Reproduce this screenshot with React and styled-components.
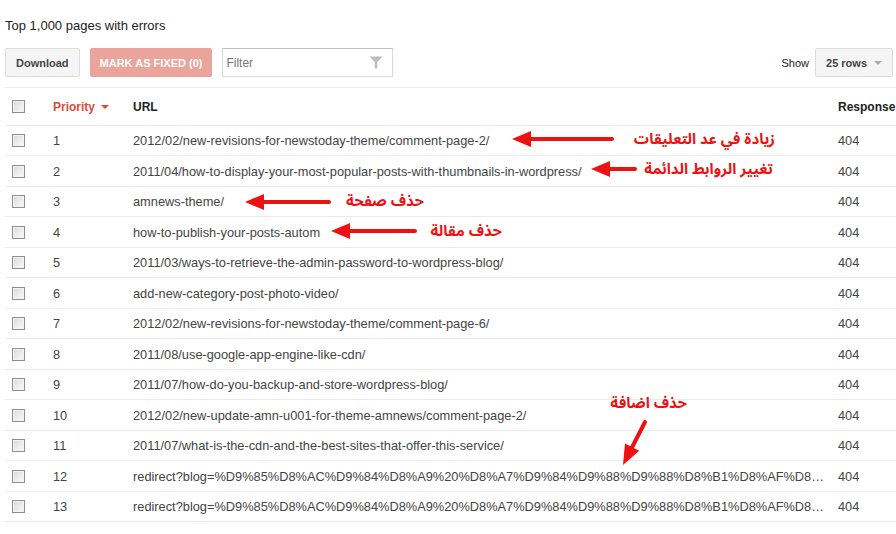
import React from "react";
import styled, { createGlobalStyle } from "styled-components";

const Global = createGlobalStyle`
  html, body { margin: 0; padding: 0; background: #fff; }
  body { font-family: "Liberation Sans", Arial, sans-serif; color: #222; }
`;

const Page = styled.div`
  position: relative;
  width: 896px;
  height: 534px;
  overflow: hidden;
  background: #fff;
`;

const Title = styled.h1`
  margin: 0;
  padding: 18px 0 0 5px;
  font-size: 13px;
  line-height: 15px;
  font-weight: normal;
  color: #222;
`;

const Toolbar = styled.div`
  display: flex;
  align-items: center;
  gap: 10px;
  margin-top: 15px;
  padding: 0 3px 0 5px;
  height: 29px;
`;

const Button = styled.button`
  height: 29px;
  padding: 0 ${(p) => p.$pad || 10}px;
  border-radius: 2px;
  font-family: "Liberation Sans", Arial, sans-serif;
  font-size: 11px;
  font-weight: bold;
  display: inline-flex;
  align-items: center;
  gap: 7px;
  border: 1px solid ${(p) => (p.$primary ? "#e9a39b" : "#dcdcdc")};
  background: ${(p) => (p.$primary ? "#eaa49c" : "#f5f5f5")};
  color: ${(p) => (p.$primary ? "#fff" : "#444")};
  cursor: default;
`;

const FilterBox = styled.div`
  width: 157px;
  height: 27px;
  border: 1px solid #d9d9d9;
  border-top-color: #c0c0c0;
  display: flex;
  align-items: center;
  justify-content: space-between;
  padding: 0 9px 0 3px;
  box-sizing: content-box;
  font-size: 12px;
  color: #777;
`;

const Spacer = styled.div`
  flex: 1;
`;

const ShowLabel = styled.span`
  font-size: 11px;
  color: #222;
  margin-right: -4px;
`;

const Caret = styled.span`
  width: 0;
  height: 0;
  border-left: 4px solid transparent;
  border-right: 4px solid transparent;
  border-top: 4px solid ${(p) => p.$color || "#aaa"};
  display: inline-block;
`;

const Table = styled.div`
  margin: 10px 0 0 5px;
  border-top: 1px solid #ebebeb;
`;

const Row = styled.div`
  display: grid;
  grid-template-columns: 48px 80px 705px 1fr;
  align-items: center;
  height: ${(p) => p.$h}px;
  border-bottom: 1px solid #ebebeb;
  font-size: ${(p) => (p.$head ? 12 : 12.8)}px;
  color: ${(p) => (p.$head ? "#222" : "#444")};
  font-weight: ${(p) => (p.$head ? "bold" : "normal")};
  white-space: nowrap;
`;

const Cell = styled.div`
  overflow: hidden;
  display: flex;
  align-items: center;
  gap: 6px;
  color: ${(p) => p.$color || "inherit"};
`;

const UrlCell = styled.div`
  overflow: hidden;
  text-overflow: ellipsis;
  white-space: nowrap;
  padding-right: 8px;
`;

const Check = styled.span`
  display: block;
  width: 11px;
  height: 11px;
  margin-left: 7px;
  border: 1px solid #8e8e8e;
  background: linear-gradient(135deg, #d9d9d9 0%, #eeeeee 60%, #f8f8f8 100%);
  box-shadow: inset 0 0 0 1px #f2f2f2;
`;

const Notes = styled.div`
  position: absolute;
  inset: 0;
  pointer-events: none;
`;

const Label = styled.span`
  position: absolute;
  right: ${(p) => p.$right}px;
  top: ${(p) => p.$top}px;
  direction: rtl;
  font-family: "Noto Sans Arabic", "DejaVu Sans", sans-serif;
  font-size: ${(p) => p.$size || 15}px;
  line-height: 20px;
  font-weight: bold;
  color: #ee1111;
  white-space: nowrap;
`;

const ArrowSvg = styled.svg`
  position: absolute;
  left: 0;
  top: 0;
`;

function Arrow({ x1, y1, x2, y2, head = 19, half = 8, w = 4 }) {
  const dx = x2 - x1;
  const dy = y2 - y1;
  const len = Math.hypot(dx, dy);
  const ux = dx / len;
  const uy = dy / len;
  const bx = x2 - ux * head;
  const by = y2 - uy * head;
  const px = -uy;
  const py = ux;
  const pts = `${x2},${y2} ${bx + px * half},${by + py * half} ${bx - px * half},${by - py * half}`;
  return (
    <g>
      <line x1={x1} y1={y1} x2={bx + ux * 2} y2={by + uy * 2} stroke="#ee1111" strokeWidth={w} strokeLinecap="round" />
      <polygon points={pts} fill="#ee1111" />
    </g>
  );
}

const rows = [
  "2012/02/new-revisions-for-newstoday-theme/comment-page-2/",
  "2011/04/how-to-display-your-most-popular-posts-with-thumbnails-in-wordpress/",
  "amnews-theme/",
  "how-to-publish-your-posts-autom",
  "2011/03/ways-to-retrieve-the-admin-password-to-wordpress-blog/",
  "add-new-category-post-photo-video/",
  "2012/02/new-revisions-for-newstoday-theme/comment-page-6/",
  "2011/08/use-google-app-engine-like-cdn/",
  "2011/07/how-do-you-backup-and-store-wordpress-blog/",
  "2012/02/new-update-amn-u001-for-theme-amnews/comment-page-2/",
  "2011/07/what-is-the-cdn-and-the-best-sites-that-offer-this-service/",
  "redirect?blog=%D9%85%D8%AC%D9%84%D8%A9%20%D8%A7%D9%84%D9%88%D9%88%D8%B1%D8%AF%D8%A8%D8%B1%D9%8A%D8%B3",
  "redirect?blog=%D9%85%D8%AC%D9%84%D8%A9%20%D8%A7%D9%84%D9%88%D9%88%D8%B1%D8%AF%D8%A8%D8%B1%D9%8A%D8%B3",
];

function Funnel() {
  return (
    <svg width="14" height="13" viewBox="0 0 14 13">
      <path d="M0.5 0.5 H13.5 L8.2 6.2 V12.5 H5.8 V6.2 Z" fill="#bdbdbd" />
    </svg>
  );
}

export default function App() {
  return (
    <Page>
      <Global />
      <Title>Top 1,000 pages with errors</Title>
      <Toolbar>
        <Button $pad={10}>Download</Button>
        <Button $primary $pad={9}>MARK AS FIXED (0)</Button>
        <FilterBox>
          <span>Filter</span>
          <Funnel />
        </FilterBox>
        <Spacer />
        <ShowLabel>Show</ShowLabel>
        <Button $pad={10}>
          25 rows <Caret />
        </Button>
      </Toolbar>
      <Table>
        <Row $head $h={37}>
          <Cell><Check /></Cell>
          <Cell $color="#dd4b39">
            Priority <Caret $color="#dd4b39" />
          </Cell>
          <Cell>URL</Cell>
          <Cell>Response</Cell>
        </Row>
        {rows.map((u, i) => (
          <Row key={i} $h={i % 2 === 0 ? 29 : 30}>
            <Cell><Check /></Cell>
            <Cell>{i + 1}</Cell>
            <UrlCell>{u}</UrlCell>
            <Cell>404</Cell>
          </Row>
        ))}
      </Table>
      <Notes>
        <ArrowSvg width="896" height="534" viewBox="0 0 896 534">
          <Arrow x1={612} y1={139} x2={512} y2={139} />
          <Arrow x1={635} y1={169} x2={591} y2={169} />
          <Arrow x1={329} y1={202} x2={245} y2={202} />
          <Arrow x1={415} y1={231} x2={331} y2={231} />
          <Arrow x1={645} y1={422} x2={623} y2={465} head={20} half={8} />
        </ArrowSvg>
        <Label $right={121} $top={129}>زيادة في عد التعليقات</Label>
        <Label $right={123} $top={159}>تغيير الروابط الدائمة</Label>
        <Label $right={472} $top={191}>حذف صفحة</Label>
        <Label $right={394} $top={221}>حذف مقالة</Label>
        <Label $right={209} $top={393}>حذف اضافة</Label>
      </Notes>
    </Page>
  );
}
